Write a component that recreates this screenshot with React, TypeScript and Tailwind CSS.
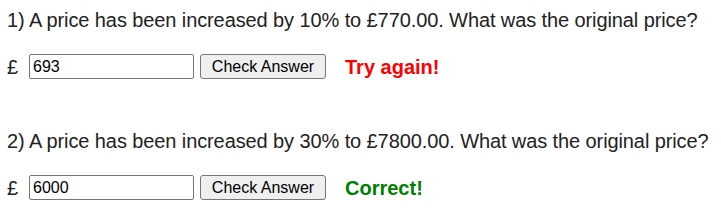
const questions = [
  { n: 1, pct: 10, total: "770.00", value: "693", ok: false },
  { n: 2, pct: 30, total: "7800.00", value: "6000", ok: true },
];

export default function App() {
  return (
    <div className="min-h-screen bg-white px-[7px] pt-[8px] text-[#222] font-['Liberation_Sans',Arial,sans-serif]">
      {questions.map((q, i) => (
        <div key={q.n} className={i > 0 ? "mt-[50px]" : ""}>
          <p className="h-[24px] whitespace-nowrap text-[20px] leading-[24px] tracking-[-0.1px]">
            {q.n}) A price has been increased by {q.pct}% to £{q.total}. What was the original price?
          </p>
          <div className="mt-[22px] flex h-[25px] items-center">
            <span className="w-[22px] text-[20px] leading-[24px]">£</span>
            <input
              defaultValue={q.value}
              className="h-[25px] w-[165px] rounded-[2px] border border-[#767676] bg-white px-[3px] text-[16px] text-black outline-none"
            />
            <button className="ml-[6px] h-[25px] w-[126px] rounded-[3px] border border-[#767676] bg-[#efefef] text-[16px] text-black">
              Check Answer
            </button>
            <span className={"ml-[19px] text-[20px] font-bold leading-[24px] " + (q.ok ? "text-[#008000]" : "text-[#ff0000]")}>
              {q.ok ? "Correct!" : "Try again!"}
            </span>
          </div>
        </div>
      ))}
    </div>
  );
}
